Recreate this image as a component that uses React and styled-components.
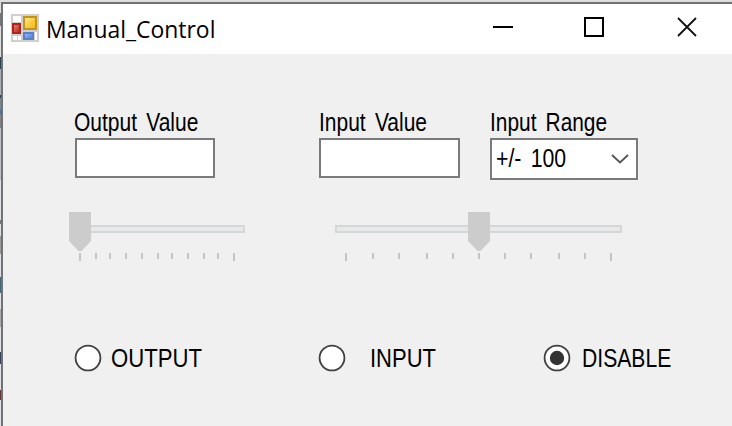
import React from 'react';
import styled, { createGlobalStyle } from 'styled-components';

const GlobalStyle = createGlobalStyle`
  * { box-sizing: border-box; }
  body { margin: 0; overflow: hidden; }
`;

const Desktop = styled.div`
  width: 732px;
  height: 426px;
  padding: 2px 0 0 1px;
  background: linear-gradient(
    #dedede 0 13px, #777 13px 26px, #dedede 26px 57px, #274452 57px 69px,
    #aab0b6 69px 95px, #30395a 95px 98px, #7d8792 98px 110px, #3b72a4 110px 114px,
    #808286 114px 128px, #bfc1c5 128px 180px, #dfe1e5 180px 220px, #777 220px 224px,
    #dfe1e5 224px 236px, #999 236px 254px, #dfe1e5 254px 277px, #426578 277px 293px,
    #dfe1e5 293px 309px, #aaa 309px 327px, #dfe1e5 327px 352px, #33415c 352px 364px,
    #dfe1e5 364px 390px, #633 390px 400px, #dfe1e5 400px
  );
`;

const Window = styled.main`
  width: 731px;
  height: 424px;
  border-top: 2px solid #717274;
  border-left: 2px solid #717274;
  background: #f0f0f0;
  color: #000;
`;

const TitleBar = styled.header`
  height: 50px;
  display: flex;
  align-items: flex-start;
  padding: 10px 35px 0 8px;
  background: #fff;
`;

const Title = styled.h1`
  width: 180px;
  margin: -2px auto 0 7px;
  font: 400 24px/34px 'Open Sans', 'Noto Sans', sans-serif;
  white-space: nowrap;
  transform: scaleX(0.955);
  transform-origin: left;
`;

const WindowButtons = styled.div`
  display: flex;
  gap: 71px;
  margin-top: 3px;
  svg { display: block; }
  svg:last-child { margin-left: 2px; }
`;

const Text = styled.span`
  display: block;
  width: max-content;
  font: 400 25px/28px 'Liberation Sans', Arial, sans-serif;
  word-spacing: 4px;
  white-space: nowrap;
  transform: scaleX(${(p) => p.$scale});
  transform-origin: left;
`;

const Fields = styled.section`
  height: 158px;
  display: grid;
  grid-template-columns: 244px 171px 148px;
  align-content: start;
  padding: 54px 0 0 72px;
`;

const Field = styled.label`
  display: block;
  > ${Text} { margin-bottom: 2px; margin-left: ${(p) => p.$indent || 0}px; }
`;

const TextBox = styled.input`
  display: block;
  width: ${(p) => p.$width}px;
  height: 40px;
  padding: 0 4px;
  border: 2px solid #7a7a7a;
  border-radius: 0;
  outline: 0;
  background: #fff;
`;

const ComboBox = styled.div`
  width: 148px;
  height: 42px;
  display: flex;
  justify-content: space-between;
  padding: 4px 7px 0 4px;
  border: 2px solid #7a7a7a;
  background: #fff;
  svg { margin-top: 9px; }
`;

const Sliders = styled.section`
  display: flex;
  gap: 90px;
  height: 130px;
  padding-left: 66px;
`;

const Slider = styled.div`
  position: relative;
  width: ${(p) => p.$width}px;
  padding-top: 13px;
`;

const Track = styled.div`
  height: 8px;
  border: 2px solid #d6d6d6;
  background: #e7eaea;
`;

const Thumb = styled.svg`
  position: absolute;
  top: 0;
  left: ${(p) => p.$left}px;
`;

const Ticks = styled.div`
  display: flex;
  margin: 20px 0 0 10px;
`;

const Tick = styled.i`
  flex: none;
  width: 2px;
  height: ${(p) => (p.$major ? 8 : 6)}px;
  margin-left: ${(p) => p.$gap}px;
  background: #c4c4c4;
`;

const Choices = styled.section`
  display: grid;
  grid-template-columns: 244px 225px 150px;
  padding-left: 71px;
`;

const Choice = styled.div`
  display: flex;
  gap: ${(p) => p.$gap}px;
  align-items: center;
  height: 32px;
`;

function TrackBar({ width, thumb, gaps }) {
  return (
    <Slider $width={width}>
      <Track />
      <Thumb $left={thumb} width="22" height="40" viewBox="0 0 22 40">
        <path d="M0 0H22V29L12.5 39H9.5L0 29Z" fill="#ccc" />
      </Thumb>
      <Ticks>
        {gaps.map((gap, i) => (
          <Tick key={i} $gap={gap} $major={i === 0 || i === gaps.length - 1} />
        ))}
      </Ticks>
    </Slider>
  );
}

function Radio({ text, scale, gap, checked }) {
  return (
    <Choice $gap={gap} role="radio" aria-checked={!!checked}>
      <svg width="28" height="28" viewBox="0 0 28 28">
        <circle cx="14" cy="14" r="12.4" fill="#fff" stroke="#404040" strokeWidth="1.8" />
        {checked && <circle cx="14" cy="14" r="7.2" fill="#333" />}
      </svg>
      <Text $scale={scale}>{text}</Text>
    </Choice>
  );
}

function FormIcon() {
  return (
    <svg width="28" height="28" viewBox="0 0 28 28">
      <defs>
        <linearGradient id="gold" x1="0" y1="0" x2="1" y2="1">
          <stop stopColor="#ffeb91" /><stop offset="1" stopColor="#f4b400" />
        </linearGradient>
        <linearGradient id="red" x1="0" y1="0" x2="1" y2="1">
          <stop stopColor="#ee8a80" /><stop offset="1" stopColor="#b51d12" />
        </linearGradient>
        <linearGradient id="blue" x1="0" y1="0" x2="1" y2="1">
          <stop stopColor="#a4c7ff" /><stop offset="1" stopColor="#3d72da" />
        </linearGradient>
      </defs>
      <path d="M0 0H28V28H0Z" fill="#cfcfcf" />
      <path d="M2 2H10V8H2ZM2 22H6V26H2ZM7 22H10V26H7ZM24 18H26V26H24Z" fill="#fff" />
      <rect x="13" y="3" width="12" height="12" fill="url(#gold)" stroke="#c49318" strokeWidth="2" />
      <rect x="2" y="10" width="7" height="9" fill="url(#red)" stroke="#a9251d" strokeWidth="2" />
      <rect x="13" y="19" width="9" height="6" fill="url(#blue)" stroke="#5a80c8" strokeWidth="2" />
    </svg>
  );
}

export default function App() {
  return (
    <>
      <GlobalStyle />
      <Desktop>
        <Window>
          <TitleBar>
            <FormIcon />
            <Title>Manual_Control</Title>
            <WindowButtons>
              <svg width="20" height="20"><path d="M0 10H20" stroke="#000" strokeWidth="2" /></svg>
              <svg width="20" height="20"><path d="M1 1H19V19H1Z" fill="none" stroke="#000" strokeWidth="2" /></svg>
              <svg width="20" height="20"><path d="M1 1L19 19M19 1L1 19" stroke="#111" strokeWidth="1.8" /></svg>
            </WindowButtons>
          </TitleBar>
          <Fields>
            <Field $indent={-1}><Text $scale={0.84}>Output Value</Text><TextBox $width={140} /></Field>
            <Field><Text $scale={0.84}>Input Value</Text><TextBox $width={141} /></Field>
            <Field>
              <Text $scale={0.835}>Input Range</Text>
              <ComboBox>
                <Text $scale={0.85}>+/- 100</Text>
                <svg width="18" height="12"><path d="M1 2L9 9.5L17 2" fill="none" stroke="#555" strokeWidth="1.8" /></svg>
              </ComboBox>
            </Field>
          </Fields>
          <Sliders>
            <TrackBar width={176} thumb={0} gaps={[0, 14, 12, 14, 14, 14, 12, 14, 14, 12, 14]} />
            <TrackBar width={287} thumb={133} gaps={[0, 25, 24, 26, 24, 24, 24, 24, 26, 24, 24]} />
          </Sliders>
          <Choices role="radiogroup">
            <Radio text="OUTPUT" scale={0.885} gap={9} />
            <Radio text="INPUT" scale={0.88} gap={24} />
            <Radio text="DISABLE" scale={0.845} gap={11} checked />
          </Choices>
        </Window>
      </Desktop>
    </>
  );
}
